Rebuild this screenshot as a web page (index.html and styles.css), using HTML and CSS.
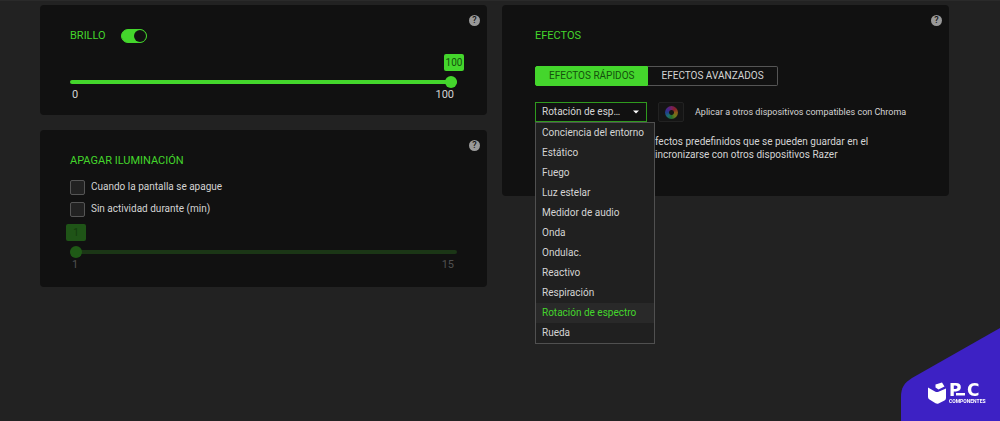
FILE: index.html
```html
<!DOCTYPE html>
<html lang="es">
  <head>
    <meta charset="UTF-8" />
    <meta name="viewport" content="width=device-width, initial-scale=1.0" />
    <title>Iluminación</title>
    <link rel="stylesheet" href="styles.css">
  </head>

  <body>
    <main class="page">
      <div class="column">
        <section class="card">
          <button class="help" aria-label="Ayuda">?</button>
          <div class="card-header">
            <h2>BRILLO</h2>
            <input type="checkbox" class="switch" aria-label="Brillo" checked />
          </div>
          <div class="slider">
            <div class="slider-value at-end"><output for="brightness">100</output></div>
            <input type="range" id="brightness" aria-label="Nivel de brillo" min="0" max="100" value="100" />
            <div class="slider-limits"><span>0</span><span>100</span></div>
          </div>
        </section>

        <section class="card shutdown">
          <button class="help" aria-label="Ayuda">?</button>
          <div class="card-header">
            <h2>APAGAR ILUMINACIÓN</h2>
          </div>
          <div class="options">
            <label class="option"><input type="checkbox" /> Cuando la pantalla se apague</label>
            <label class="option"><input type="checkbox" /> Sin actividad durante (min)</label>
          </div>
          <div class="slider disabled">
            <div class="slider-value"><output for="minutes">1</output></div>
            <input type="range" id="minutes" aria-label="Minutos" min="1" max="15" value="1" disabled />
            <div class="slider-limits"><span>1</span><span>15</span></div>
          </div>
        </section>
      </div>

      <section class="card effects">
        <button class="help" aria-label="Ayuda">?</button>
        <div class="card-header">
          <h2>EFECTOS</h2>
        </div>
        <div class="tabs">
          <button class="tab active">EFECTOS RÁPIDOS</button>
          <button class="tab">EFECTOS AVANZADOS</button>
        </div>
        <div class="effect-row">
          <div class="dropdown">
            <select class="dropdown-select" aria-label="Efecto">
              <option>Rotación de espectro</option>
            </select>
            <svg class="dropdown-arrow" viewBox="0 0 6 4"><path d="M0 0.5h6L3 3.5z" fill="#fff" /></svg>
            <ul class="dropdown-menu" role="listbox" aria-label="Efectos">
              <li role="option">Conciencia del entorno</li>
              <li role="option">Estático</li>
              <li role="option">Fuego</li>
              <li role="option">Luz estelar</li>
              <li role="option">Medidor de audio</li>
              <li role="option">Onda</li>
              <li role="option">Ondulac.</li>
              <li role="option">Reactivo</li>
              <li role="option">Respiración</li>
              <li role="option" class="selected" aria-selected="true">Rotación de espectro</li>
              <li role="option">Rueda</li>
            </ul>
          </div>
          <button class="chroma" aria-labelledby="chroma-label"><span class="wheel"></span></button>
          <span class="chroma-label" id="chroma-label">Aplicar a otros dispositivos compatibles con Chroma</span>
        </div>
        <p class="description">
          fectos predefinidos que se pueden guardar en el<br />
          incronizarse con otros dispositivos Razer
        </p>
      </section>
    </main>

    <svg class="brand" viewBox="0 0 99 93" role="img" aria-label="PC Componentes">
      <path d="M0 93V69C0 60 3 55 11 50L99 0V93z" fill="#3d21c4" />
      <g fill="#fff">
        <path d="M27 59.5L34 63.5Q36 64.5 38 63.5L45 60.5V70Q45 71.5 43.500 72.500L37.500 75.500Q36 76 34.500 75.300L28.500 71.500Q27 70.500 27 69z" />
        <path d="M34.500 56.500L41 54.500L43.500 58.500L37.500 61.500L34.500 59.500z" />
        <path d="M55 65h9v2.500h-9z" />
        <text class="brand-letter" x="48" y="68">P</text>
        <text class="brand-letter" x="66" y="68">C</text>
        <text class="brand-name" x="48" y="75">COMPONENTES</text>
      </g>
    </svg>
  </body>
</html>
```

FILE: styles.css
```css
* {
  box-sizing: border-box;
}

body {
  margin: 0;
  min-height: 100vh;
  background-color: #222;
  border-top: 1px solid #2a2a2a;
  color: #d4d4d4;
  font-family: Roboto, "Liberation Sans", sans-serif;
  font-size: 10px;
  line-height: 14px;
}

button,
input,
select {
  margin: 0;
  font: inherit;
  color: inherit;
}

.page {
  display: grid;
  grid-template-columns: 1fr 1fr;
  align-items: start;
  gap: 15px;
  padding: 4px 51px 0 40px;
}

.column {
  display: grid;
  gap: 15px;
}

.card {
  position: relative;
  padding: 24px 30px 13px;
  background-color: #111;
  border-radius: 4px;
}

.card-header {
  display: flex;
  align-items: center;
  gap: 15px;
  height: 14px;
}

h2 {
  margin: 0;
  color: #44d62c;
  font-size: 11px;
  font-weight: 400;
}

.help {
  position: absolute;
  top: 10px;
  right: 7px;
  width: 11px;
  height: 11px;
  padding: 0;
  border: none;
  border-radius: 50%;
  background-color: #999;
  color: #111;
  font-size: 9px;
  font-weight: 500;
  line-height: 11px;
}

/* switch */
.switch {
  appearance: none;
  display: flex;
  justify-content: flex-end;
  width: 26px;
  height: 14px;
  border: 1px solid #44d62c;
  border-radius: 7px;
  background-color: #44d62c;
}

.switch::before {
  content: "";
  width: 12px;
  height: 12px;
  border-radius: 50%;
  background-color: #111;
}

/* sliders */
.slider {
  margin-top: 11px;
}

.slider-value {
  display: flex;
  margin: 0 -7px 5px -4px;
}

.slider-value.at-end {
  justify-content: flex-end;
}

output {
  width: 20px;
  height: 17px;
  border-radius: 2px;
  background-color: #44d62c;
  color: #14500c;
  line-height: 18px;
  text-align: center;
}

input[type="range"] {
  appearance: none;
  display: block;
  width: 100%;
  height: 12px;
  background: none;
}

input[type="range"]::-webkit-slider-runnable-track {
  height: 4px;
  border-radius: 2px;
  background-color: #44d62c;
}

input[type="range"]::-webkit-slider-thumb {
  appearance: none;
  width: 12px;
  height: 12px;
  margin-top: -4px;
  border-radius: 50%;
  background-color: #44d62c;
}

.slider-limits {
  display: flex;
  justify-content: space-between;
  padding: 0 3px 0 2px;
  font-size: 11px;
}

.slider.disabled {
  margin-top: 4px;
}

.disabled output {
  background-color: #1f5417;
  color: #143a0e;
}

.disabled input[type="range"]::-webkit-slider-runnable-track {
  background-color: #1b3616;
}

.disabled input[type="range"]::-webkit-slider-thumb {
  background-color: #1f5a16;
}

.disabled .slider-limits {
  color: #505050;
}

/* checkboxes */
.shutdown {
  padding-bottom: 15px;
}

.options {
  margin-top: 8px;
}

.option {
  display: flex;
  align-items: center;
  gap: 6px;
  height: 22px;
}

.option input {
  appearance: none;
  width: 15px;
  height: 15px;
  border: 1px solid #555;
  border-radius: 2px;
  background-color: #222;
}

/* effects */
.effects {
  padding-left: 33px;
  padding-bottom: 35px;
}

.tabs {
  display: flex;
  margin-top: 23px;
}

.tab {
  height: 20px;
  padding: 0 13px;
  border: 1px solid #555;
  border-left: none;
  border-radius: 0 2px 2px 0;
  background-color: #111;
}

.tab.active {
  border: 1px solid #44d62c;
  border-radius: 2px 0 0 2px;
  background-color: #44d62c;
  color: #14500c;
}

.effect-row {
  display: flex;
  align-items: center;
  margin-top: 16px;
}

.dropdown {
  position: relative;
  width: 112px;
}

.dropdown-select {
  appearance: none;
  display: block;
  width: 100%;
  height: 20px;
  padding: 0 22px 0 6px;
  border: 1px solid #2f9a1e;
  border-radius: 0;
  background-color: #111;
  text-overflow: ellipsis;
}

.dropdown-arrow {
  position: absolute;
  top: 8px;
  right: 8px;
  width: 6px;
  height: 4px;
}

.dropdown-menu {
  position: absolute;
  top: 100%;
  left: 0;
  z-index: 1;
  width: 120px;
  margin: 0;
  padding: 0;
  border: 1px solid #505050;
  background-color: #202020;
  list-style: none;
  line-height: 20px;
}

.dropdown-menu li {
  padding: 0 6px;
  white-space: nowrap;
}

.dropdown-menu .selected {
  background-color: #292929;
  color: #44d62c;
}

.chroma {
  display: flex;
  align-items: center;
  justify-content: center;
  width: 26px;
  height: 20px;
  margin: 0 11px;
  padding: 0;
  border: 1px solid #222;
  border-radius: 2px;
  background-color: #151515;
}

.wheel {
  width: 13px;
  height: 13px;
  border-radius: 50%;
  background: radial-gradient(#151515 2px, transparent 3px), conic-gradient(#75205f, #86202a, #8a5a18, #6c7a1c, #24702c, #1c6c70, #20408a, #4a2488, #75205f);
}

.chroma-label {
  font-size: 9px;
}

/* the open menu covers the left part of this row */
.description {
  margin: 13px 0 0;
  padding-left: 120px;
  line-height: 13px;
  white-space: nowrap;
}

/* brand corner */
.brand {
  position: fixed;
  right: 0;
  bottom: 0;
  width: 99px;
  height: 93px;
}

.brand-letter {
  font-family: "DejaVu Sans", sans-serif;
  font-size: 17px;
  font-weight: 700;
}

.brand-name {
  font-size: 5px;
  font-weight: 700;
}
```
